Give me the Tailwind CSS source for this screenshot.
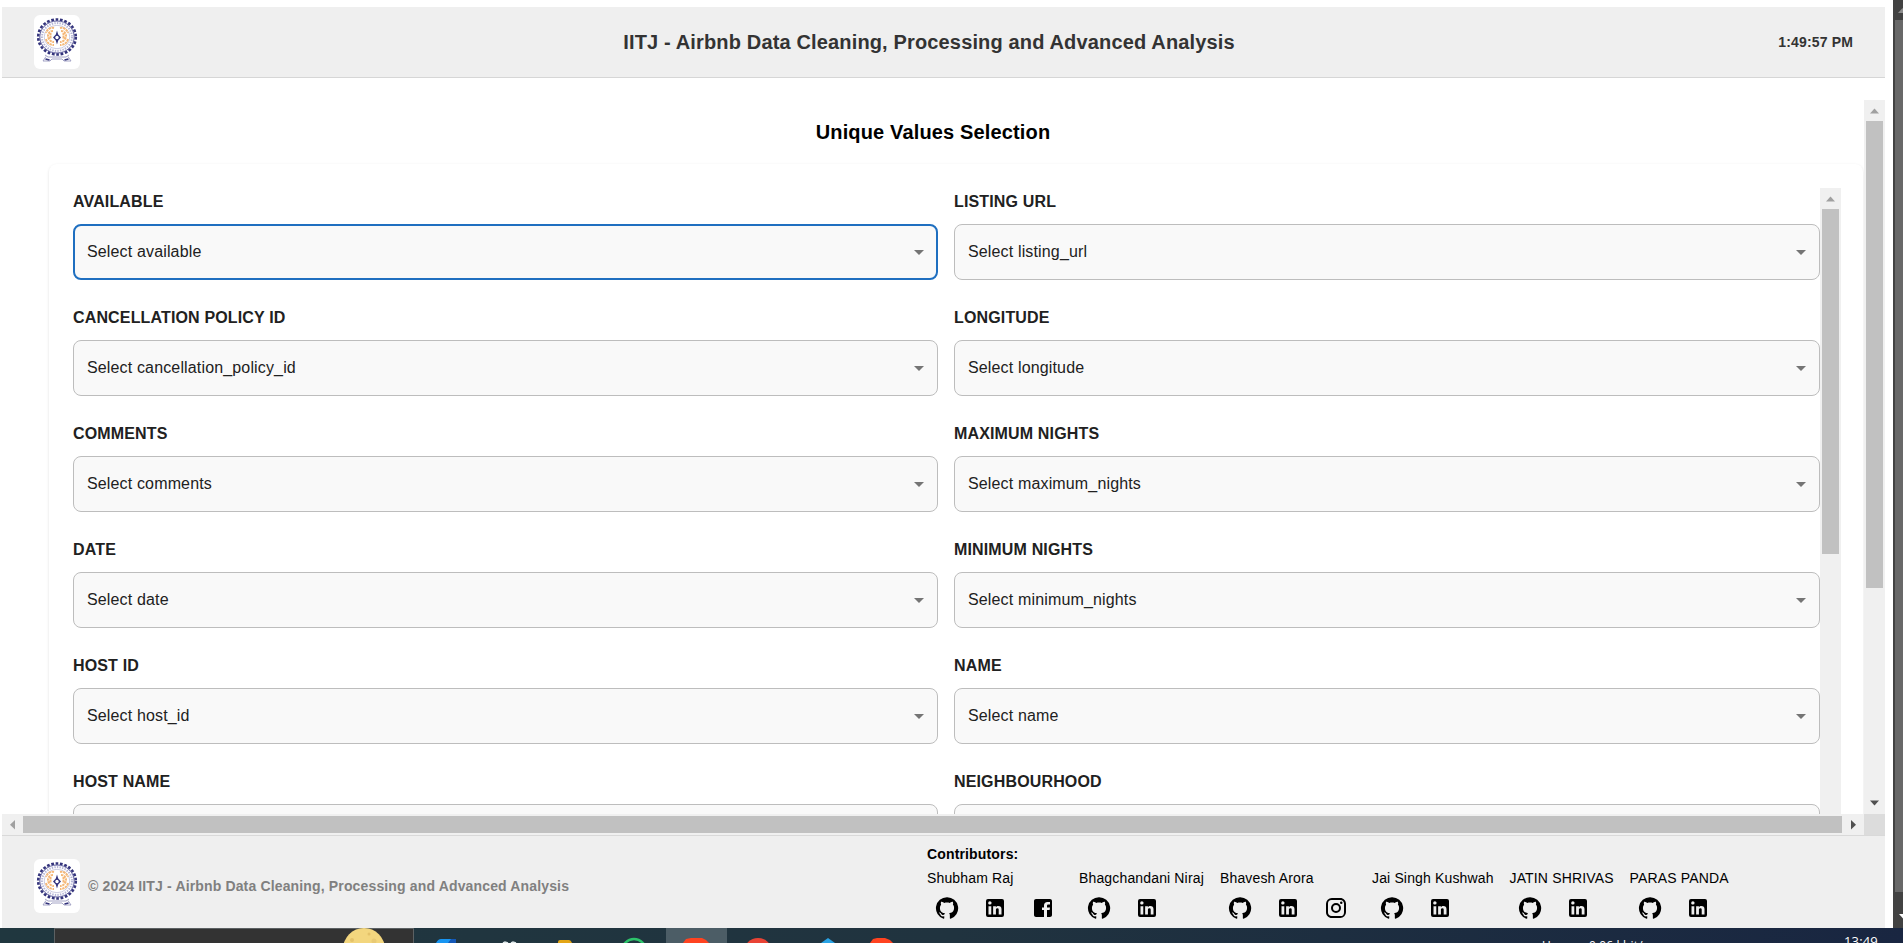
<!DOCTYPE html>
<html lang="en">
<head>
<meta charset="utf-8">
<title>IITJ - Airbnb Data Cleaning, Processing and Advanced Analysis</title>
<script src="https://cdn.jsdelivr.net/npm/@tailwindcss/browser@4"></script>
</head>
<body class="h-[943px] w-[1903px] overflow-hidden bg-white font-['Liberation_Sans',Arial,sans-serif] tracking-[0.15px]">
<svg class="hidden">
  <symbol id="logo" viewBox="0 0 46 54">
    <ellipse cx="23" cy="22" rx="18.800" ry="17.500" fill="none" stroke="#34347c" stroke-width="2.600" stroke-dasharray="2.700 1.700"/>
    <ellipse cx="23" cy="22" rx="17.200" ry="16" fill="#fff" stroke="#4a4a90" stroke-width="0.900"/>
    <ellipse cx="23" cy="22" rx="15" ry="13.900" fill="none" stroke="#b4b4d6" stroke-width="2" stroke-dasharray="1.400 1.200"/>
    <ellipse cx="23" cy="22" rx="12.800" ry="11.700" fill="none" stroke="#a9a9cc" stroke-width="0.600"/>
    <g fill="none" stroke="#f5b878" stroke-width="2" stroke-dasharray="2.400 0.700">
      <path d="M20 13c-4-1-7 2-8 5M19 16c-4 0-5 3-5 5s2 6 6 6M16.500 18v6M12 24c1 4 4 6 8 6"/>
      <path d="M26 13c4-1 7 2 8 5M27 16c4 0 5 3 5 5s-2 6-6 6M29.500 18v6M34 24c-1 4-4 6-8 6"/>
    </g>
    <path d="M23 15.500l1.200 3.900 2.800 3.100-2.800 3.100-1.200 3.900-1.200-3.900-2.800-3.100 2.800-3.100z" fill="#33337d"/>
    <circle cx="23" cy="22.500" r="1.700" fill="#fff"/>
    <path d="M11 40l3 2h18l3-2M9 46l3-4.500M37 46l-3-4.500M9 46h7l2-2h10l2 2h7" fill="none" stroke="#9a9abf" stroke-width="0.900"/>
    <path d="M11.500 44l4 1M30.500 45l4-1" stroke="#34347c" stroke-width="1.800"/>
  </symbol>
  <symbol id="github" viewBox="0 0 24 24"><path d="M12 1.27a11 11 0 00-3.48 21.46c.55.09.73-.28.73-.55v-1.84c-3.03.64-3.67-1.46-3.67-1.46-.55-1.29-1.28-1.65-1.28-1.65-.92-.65.1-.65.1-.65 1.1 0 1.73 1.1 1.73 1.1.92 1.65 2.57 1.2 3.21.92a2 2 0 01.64-1.47c-2.47-.27-5.04-1.19-5.04-5.5 0-1.1.46-2.1 1.2-2.84a3.76 3.76 0 010-2.93s.91-.28 3.11 1.1c1.8-.49 3.7-.49 5.5 0 2.1-1.38 3.02-1.1 3.02-1.1a3.76 3.76 0 01.1 2.93c.83.74 1.2 1.74 1.2 2.94 0 4.21-2.57 5.13-5.04 5.4.45.37.82.92.82 2.02v3.03c0 .27.1.64.73.55A11 11 0 0012 1.27"/></symbol>
  <symbol id="linkedin" viewBox="0 0 24 24"><path d="M19 3a2 2 0 0 1 2 2v14a2 2 0 0 1-2 2H5a2 2 0 0 1-2-2V5a2 2 0 0 1 2-2h14m-.5 15.5v-5.3a3.26 3.26 0 0 0-3.26-3.26c-.85 0-1.84.52-2.32 1.300v-1.110h-2.790v8.370h2.790v-4.930c0-.77.62-1.400 1.390-1.400a1.400 1.400 0 0 1 1.400 1.400v4.930h2.790M6.880 8.560a1.680 1.680 0 0 0 1.680-1.680c0-.93-.75-1.690-1.680-1.690a1.690 1.690 0 0 0-1.690 1.690c0 .93.76 1.680 1.690 1.680m1.390 9.940v-8.370H5.500v8.370h2.770z"/></symbol>
  <symbol id="facebook" viewBox="0 0 24 24"><path d="M19 3H5c-1.100 0-2 .9-2 2v14c0 1.100.9 2 2 2h8v-7h-2v-2.500h2V9.500C13 7.300 14.300 6 16.400 6H19v2.500h-1.500c-1 0-1.500.4-1.500 1.300v1.700h3l-.4 2.500H16v7h3c1.100 0 2-.9 2-2V5c0-1.100-.9-2-2-2z"/></symbol>
  <symbol id="instagram" viewBox="0 0 24 24"><path d="M7.800 2h8.400C19.400 2 22 4.600 22 7.800v8.400a5.800 5.800 0 0 1-5.800 5.800H7.800C4.600 22 2 19.400 2 16.200V7.800A5.800 5.800 0 0 1 7.800 2m-.2 2A3.600 3.600 0 0 0 4 7.600v8.800C4 18.390 5.610 20 7.600 20h8.800a3.600 3.600 0 0 0 3.600-3.600V7.600C20 5.610 18.390 4 16.400 4H7.600m9.650 1.500a1.250 1.250 0 1 1 0 2.500 1.250 1.250 0 0 1 0-2.500M12 7a5 5 0 1 1 0 10 5 5 0 0 1 0-10m0 2a3 3 0 1 0 0 6 3 3 0 0 0 0-6z"/></symbol>
</svg>

<div class="flex h-[928px]">
  <div class="flex w-[1893px] flex-col pt-[7px] pr-2 pl-0.5">
    <header class="grid h-[71px] shrink-0 grid-cols-[200px_1fr_200px] items-center border-b border-[#d6d6d6] bg-[#efefef] pr-8 pl-8">
      <svg class="h-[54px] w-[46px] rounded-md bg-white"><use href="#logo"/></svg>
      <h1 class="pr-[29px] text-center text-xl font-bold text-[#333]">IITJ - Airbnb Data Cleaning, Processing and Advanced Analysis</h1>
      <div class="text-right text-sm font-bold text-[#333]">1:49:57 PM</div>
    </header>

    <main class="mt-[22px] flex h-[714px] shrink-0">
      <div class="w-[1862px] overflow-hidden pt-4 pl-[47px]">
        <h2 class="pr-[47px] text-center text-xl leading-8 font-bold text-black">Unique Values Selection</h2>
        <div class="mt-4 flex h-[660px] w-[1814px] rounded-lg pt-6 pl-6 shadow-[0_1px_3px_rgba(0,0,0,0.12)]">
          <div id="fields" class="grid w-[1747px] shrink-0 auto-rows-[116px] grid-cols-[865px_866px] gap-x-4"></div>
          <div class="flex h-[626px] w-[21px] shrink-0 flex-col items-center bg-[#f0f0f0]">
            <svg class="h-[21px] w-[21px] shrink-0" viewBox="0 0 21 21"><path d="M6 13.500h9l-4.500-5z" fill="#a0a0a0"/></svg>
            <div class="h-[345px] w-[17px] bg-[#c1c1c1]"></div>
          </div>
        </div>
      </div>
      <div class="flex w-[21px] shrink-0 flex-col items-center bg-[#f0f0f0]">
        <svg class="h-[21px] w-[21px] shrink-0" viewBox="0 0 21 21"><path d="M6 13.500h9l-4.500-5z" fill="#a0a0a0"/></svg>
        <div class="h-[467px] w-[17px] bg-[#c1c1c1]"></div>
        <svg class="mt-auto h-[21px] w-[21px] shrink-0" viewBox="0 0 21 21"><path d="M6 7.500h9l-4.500 5z" fill="#505050"/></svg>
      </div>
    </main>

    <div class="flex h-[21px] shrink-0 items-center bg-[#f0f0f0]">
      <svg class="h-[21px] w-[21px]" viewBox="0 0 21 21"><path d="M13 6v9.500l-5-4.700z" fill="#a0a0a0"/></svg>
      <div class="h-[17px] w-[1819px] bg-[#c1c1c1]"></div>
      <svg class="h-[21px] w-[22px]" viewBox="0 0 22 21"><path d="M9 6v9.500l5-4.700z" fill="#505050"/></svg>
      <div class="h-[21px] w-[21px] bg-[#dcdcdc]"></div>
    </div>

    <footer class="flex h-[93px] shrink-0 items-start border-t border-[#d9d9d9] bg-[#efefef] pl-8">
      <svg class="mt-[23px] h-[54px] w-[46px] rounded-md bg-white"><use href="#logo"/></svg>
      <p class="mt-10 ml-2 w-[839px] text-sm font-bold text-[#808080]">© 2024 IITJ - Airbnb Data Cleaning, Processing and Advanced Analysis</p>
      <section class="pt-1.5 text-sm text-black">
        <h3 class="leading-6 font-bold">Contributors:</h3>
        <div id="people" class="grid grid-cols-[152px_141px_152px_137.5px_120px_120px] whitespace-nowrap"></div>
      </section>
    </footer>
  </div>
  <div class="flex w-2.5 flex-col bg-[#424242] pl-0.5">
    <svg class="h-5 w-2 shrink-0" viewBox="0 0 8 20"><path d="M3 13h9l-4.500-5z" fill="#8d8d8d"/></svg>
    <div class="h-[872px] bg-[#686868]"></div>
    <svg class="mt-auto h-9 w-2 shrink-0" viewBox="0 0 8 36"><path d="M4 22h9l-4.500 5z" fill="#fff"/></svg>
  </div>
</div>

<div class="relative h-[15px] overflow-hidden bg-linear-to-r from-[#20373f] via-[#20333f] via-50% to-[#192641] text-white">
  <div class="absolute left-[54px] h-4 w-[360px] border border-[#5c6163] bg-[#333]"></div>
  <div class="absolute left-[666px] h-4 w-[61px] bg-[#4c5d66]"></div>
  <svg class="absolute top-0 left-0 h-[15px] w-[900px]" viewBox="0 0 900 15">
    <circle cx="364" cy="21" r="21" fill="#f3d67e"/><circle cx="352" cy="12" r="2" fill="#e4c26a"/><circle cx="369" cy="6" r="1.500" fill="#e4c26a"/><circle cx="374" cy="13" r="2.500" fill="#e9ca74"/>
    <path d="M436 15q2-4 5-4h14l-3 4z" fill="#1795f2"/><path d="M451 11h5v4h-8z" fill="#1458b7"/>
    <path d="M503 15l2-1 3 1M511 15l2-1 3 1" fill="none" stroke="#dfe8ea" stroke-width="1.500"/>
    <path d="M558 15v-1q0-2 2-2h9q2 0 3 3z" fill="#e3a515"/>
    <circle cx="634" cy="23" r="12" fill="none" stroke="#2dc46b" stroke-width="2.500"/>
    <path d="M683 15l3-4 5-1h11l4 2 3 3z" fill="#ff4320"/>
    <circle cx="758" cy="24" r="14" fill="#e94335"/>
    <path d="M821 15l7-5 7 5z" fill="#29a3e5"/>
    <path d="M870 15l3-4 4-1h8l5 2 3 3z" fill="#ff4320"/>
  </svg>
  <div class="absolute top-[10px] left-[1542px] font-['Open_Sans',sans-serif] text-xs leading-4">U:</div>
  <div class="absolute top-[10px] left-[1589px] font-['Open_Sans',sans-serif] text-xs leading-4">0.06 kbit/s</div>
  <div class="absolute top-[5px] left-[1844px] font-['Open_Sans',sans-serif] text-[13px] leading-4">13:49</div>
</div>

<script>
const fields = ['available','listing_url','cancellation_policy_id','longitude','comments','maximum_nights','date','minimum_nights','host_id','name','host_name','neighbourhood'];
document.getElementById('fields').innerHTML = fields.map((f, i) => `
  <div>
    <div class="h-9 text-base leading-7 font-bold text-[#212121] uppercase">${f.replace(/_/g, ' ')}</div>
    <div class="flex h-14 items-center justify-between rounded-lg bg-[#f9f9f9] text-base text-[#212121] ${i ? 'border border-[#bdbdbd] px-[13px]' : 'border-2 border-[#1f6fc0] px-3'}">
      <span>Select ${f}</span>
      <svg class="h-[5px] w-2.5" viewBox="0 0 10 5"><path d="M0 0h10L5 5z" fill="#757575"/></svg>
    </div>
  </div>`).join('');
const people = [['Shubham Raj','facebook'],['Bhagchandani Niraj'],['Bhavesh Arora','instagram'],['Jai Singh Kushwah'],['JATIN SHRIVAS'],['PARAS PANDA']];
document.getElementById('people').innerHTML = people.map(([name, extra]) => `
  <div>
    <div class="leading-6">${name}</div>
    <div class="mt-1.5 ml-2 flex gap-6">${['github','linkedin'].concat(extra || []).map(n => `<svg class="h-6 w-6"><use href="#${n}"/></svg>`).join('')}</div>
  </div>`).join('');
</script>
</body>
</html>
